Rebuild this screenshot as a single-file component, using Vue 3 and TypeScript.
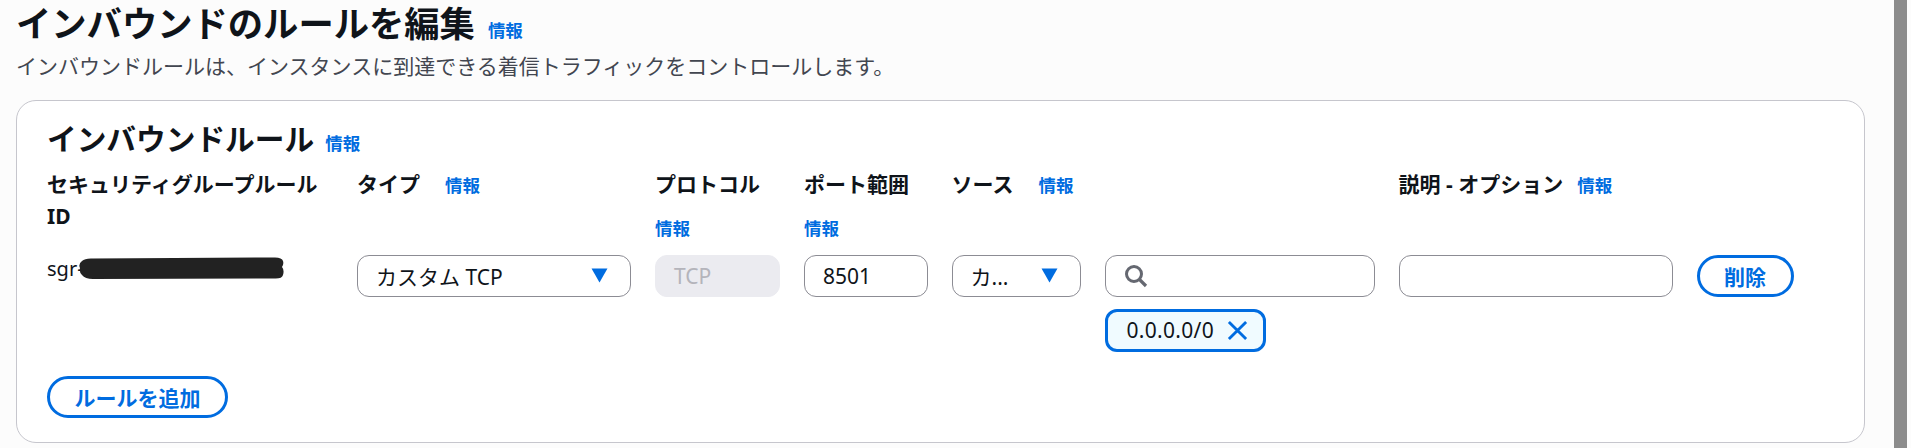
<script setup lang="ts">
const columns = [
  { label: 'セキュリティグループルール ID', cls: 'narrow', info: false },
  { label: 'タイプ', cls: 'wide-gap', info: true },
  { label: 'プロトコル', cls: 'stack', info: true },
  { label: 'ポート範囲', cls: 'stack', info: true },
  { label: 'ソース', cls: 'wide-gap', info: true },
  { label: '', cls: '', info: false },
  { label: '説明 - オプション', cls: 'tight-gap', info: true },
  { label: '', cls: '', info: false },
]
</script>

<template>
  <div class="page">
    <main class="content">
      <header class="page-head">
        <h1 class="page-title">インバウンドのルールを編集<a class="info title-info">情報</a></h1>
        <p class="page-desc">インバウンドルールは、インスタンスに到達できる着信トラフィックをコントロールします。</p>
      </header>

      <section class="card">
        <h2 class="card-title">インバウンドルール<a class="info card-info">情報</a></h2>

        <div class="rule-grid">
          <div v-for="(col, i) in columns" :key="i" class="col-head" :class="col.cls">
            <span v-if="col.label" class="col-label">{{ col.label }}</span>
            <a v-if="col.info" class="info">情報</a>
          </div>

          <div class="rule-id">
            <span>sgr-</span>
            <svg class="scribble" viewBox="0 0 206 22" width="206" height="22" aria-hidden="true">
              <path d="M3 4 Q6 1 14 1.500 L196 0.500 Q203 0.500 204 4 Q205 7 203 10 Q205.500 13 204 18 Q203 22 195 21.500 L14 22 Q6 22 3 18 Q0 15 1 11 Q-1 7 3 4 Z" fill="#222222" />
            </svg>
          </div>

          <div class="field select">
            <span class="value">カスタム TCP</span>
            <svg class="caret" viewBox="0 0 16 14" width="17" height="15" aria-hidden="true"><path d="M0.500 0.500 H15.500 L8 13.500 Z" fill="#006ce0" /></svg>
          </div>

          <div class="field disabled"><span class="value">TCP</span></div>

          <div class="field"><span class="value">8501</span></div>

          <div class="field select">
            <span class="value">カ...</span>
            <svg class="caret" viewBox="0 0 16 14" width="17" height="15" aria-hidden="true"><path d="M0.500 0.500 H15.500 L8 13.500 Z" fill="#006ce0" /></svg>
          </div>

          <div class="source-cell">
            <div class="field search">
              <svg class="search-icon" viewBox="0 0 24 24" width="24" height="24" aria-hidden="true">
                <circle cx="10" cy="10" r="7.500" fill="none" stroke="#656871" stroke-width="3" />
                <path d="M15.500 15.500 L22 22" fill="none" stroke="#656871" stroke-width="3.200" />
              </svg>
            </div>
            <div class="token">
              <span>0.0.0.0/0</span>
              <svg viewBox="0 0 22 22" width="21" height="21" aria-hidden="true">
                <path d="M2 2 L20 20 M20 2 L2 20" fill="none" stroke="#006ce0" stroke-width="3" />
              </svg>
            </div>
          </div>

          <div class="field"></div>

          <button class="btn" type="button">削除</button>
        </div>

        <button class="btn add" type="button">ルールを追加</button>
      </section>
    </main>
    <div class="scrollbar"></div>
  </div>
</template>

<style>
html, body { margin: 0; background: #fcfcfc; }
</style>

<style scoped>
.page {
  display: flex;
  width: 1911px;
  height: 448px;
  overflow: hidden;
  background: #fcfcfc;
  color: #0f141a;
  font-family: "Noto Sans", "Noto Sans CJK JP", sans-serif;
  font-size: 21px;
}
.content {
  flex: 1;
  min-width: 0;
  padding: 0 29px 0 16px;
}
.page-title {
  margin: 0;
  padding-top: 2.500px;
  font-size: 35.300px;
  line-height: 41px;
  font-weight: 700;
  display: flex;
  align-items: baseline;
}
.page-desc {
  margin: 0;
  font-size: 21px;
  line-height: 30px;
  color: #424650;
}
.info {
  color: #006ce0;
  font-size: 17.500px;
  font-weight: 700;
  text-decoration: none;
}
.title-info { margin-left: 13px; }
.card {
  margin-top: 19px;
  height: 343px;
  box-sizing: border-box;
  padding: 18px 30px 0;
  background: #fff;
  border: 1px solid #c6c6cd;
  border-radius: 20px;
}
.card-title {
  margin: 0;
  font-size: 29.700px;
  line-height: 40px;
  font-weight: 700;
  display: flex;
  align-items: baseline;
}
.card-info { margin-left: 11px; }
.rule-grid {
  display: grid;
  grid-template-columns: 286px 274px 125px 123.500px 129px 270px 274px 97px;
  grid-template-rows: 87px auto;
  column-gap: 24px;
  margin-top: 5px;
  align-items: start;
}
.col-head {
  display: flex;
  flex-wrap: wrap;
  align-items: baseline;
  line-height: 32px;
}
.col-label { font-weight: 700; font-size: 21px; }
.wide-gap .info { margin-left: 25px; }
.tight-gap .info { margin-left: 14px; }
.stack { flex-direction: column; flex-wrap: nowrap; align-items: flex-start; }
.stack .info { margin-top: 16px; line-height: 24px; }
.rule-id {
  display: flex;
  align-items: flex-start;
  height: 42px;
  line-height: 28px;
  font-size: 20px;
}
.scribble { margin: 2px 0 0 -5px; flex: none; }
.field {
  box-sizing: border-box;
  height: 42px;
  display: flex;
  align-items: center;
  justify-content: space-between;
  padding: 0 18px;
  background: #fff;
  border: 1px solid #8c8c94;
  border-radius: 12px;
  font-size: 21px;
  color: #0f141a;
}
.select { padding-right: 22px; }
.disabled {
  background: #ebebf0;
  border-color: #ebebf0;
  color: #b4b4bb;
}
.search { justify-content: flex-start; padding-left: 18px; }
.source-cell { display: flex; flex-direction: column; gap: 12px; align-items: flex-start; }
.source-cell .field { width: 100%; }
.token {
  box-sizing: border-box;
  width: 161px;
  height: 43px;
  display: flex;
  align-items: center;
  justify-content: space-between;
  padding: 0 15px 0 19px;
  background: #f0fbff;
  border: 3px solid #006ce0;
  border-radius: 12px;
  font-size: 21px;
  letter-spacing: 0.300px;
}
.btn {
  box-sizing: border-box;
  height: 42px;
  padding: 0;
  background: #fff;
  border: 3px solid #006ce0;
  border-radius: 21px;
  color: #006ce0;
  font-family: inherit;
  font-size: 21px;
  font-weight: 700;
}
.add {
  display: block;
  width: 181px;
  margin-top: 24.500px;
}
.scrollbar {
  flex: none;
  width: 13px;
  margin-right: 4px;
  background: #8c8c8c;
}
</style>
